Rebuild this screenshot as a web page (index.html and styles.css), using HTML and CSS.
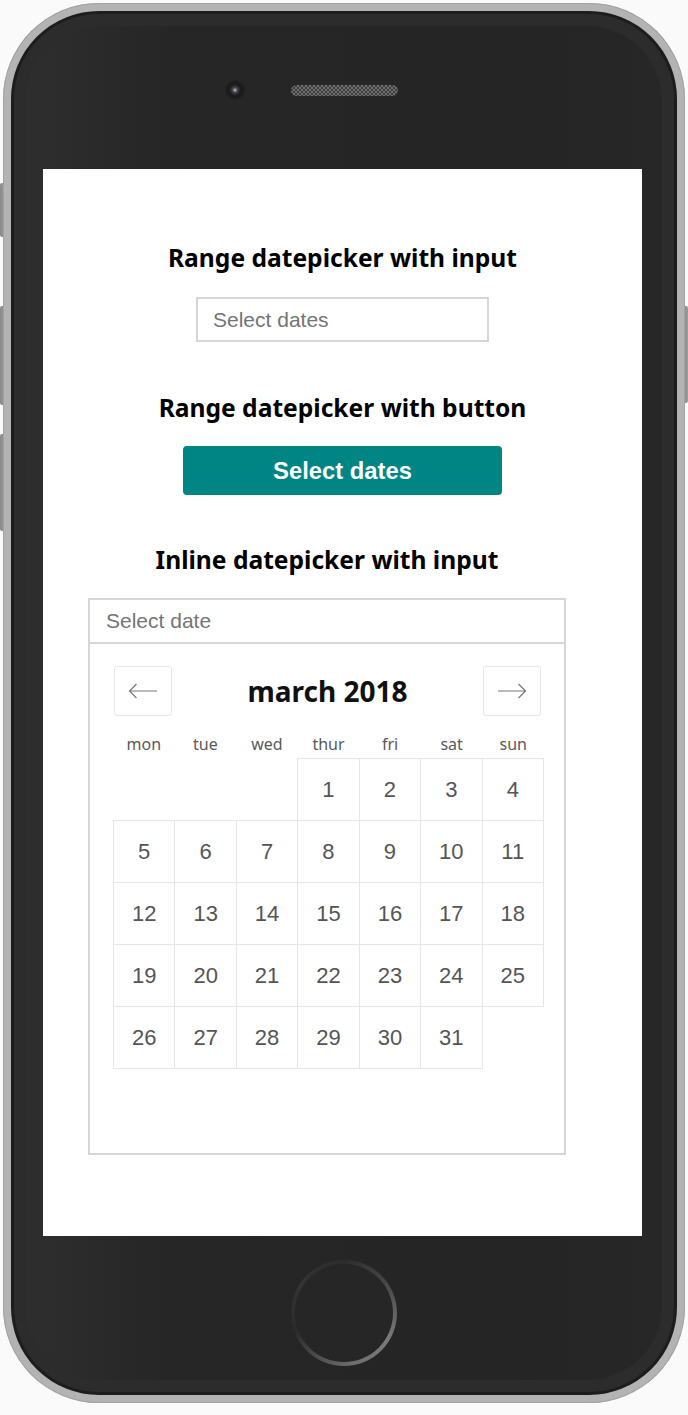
FILE: index.html
```html
<!DOCTYPE html>
<html lang="en">
<head>
  <meta charset="UTF-8">
  <meta name="viewport" content="width=device-width, initial-scale=1.0">
  <title>Datepicker demo</title>
  <link rel="stylesheet" href="styles.css">
</head>
<body>
  <div class="device">
    <!-- pulsanti laterali -->
    <span class="side-btn side-mute"></span>
    <span class="side-btn side-vol-up"></span>
    <span class="side-btn side-vol-down"></span>
    <span class="side-btn side-power"></span>

    <div class="phone">
      <div class="bezel">
        <div class="face">
          <div class="top-bar">
            <span class="camera"></span>
            <span class="speaker"></span>
          </div>

          <div class="screen">
            <section class="demo">
              <h2>Range datepicker with input</h2>
              <input class="date-input range-input" type="text" placeholder="Select dates">
            </section>

            <section class="demo demo-button">
              <h2>Range datepicker with button</h2>
              <button class="select-btn">Select dates</button>
            </section>

            <section class="demo demo-inline">
              <h2>Inline datepicker with input</h2>
              <input class="date-input inline-input" type="text" placeholder="Select date">
              <div class="calendar">
                <div class="cal-head">
                  <button class="nav-btn" aria-label="previous month">
                    <svg width="30" height="16" viewBox="0 0 30 16"><path d="M29 8H1.5M8.5 1L1.5 8l7 7" fill="none" stroke="#777" stroke-width="1.2"/></svg>
                  </button>
                  <span class="cal-title">march 2018</span>
                  <button class="nav-btn" aria-label="next month">
                    <svg width="30" height="16" viewBox="0 0 30 16"><path d="M1 8h27.5M21.5 1l7 7-7 7" fill="none" stroke="#777" stroke-width="1.2"/></svg>
                  </button>
                </div>
                <div class="weekdays">
                  <span>mon</span><span>tue</span><span>wed</span><span>thur</span><span>fri</span><span>sat</span><span>sun</span>
                </div>
                <div class="days" id="days"></div>
              </div>
            </section>
          </div>

          <div class="home-area">
            <span class="home-btn"></span>
          </div>
        </div>
      </div>
    </div>
  </div>

  <script>
    // marzo 2018 inizia di giovedì
    const days = document.getElementById('days');
    const offset = 3;
    for (let i = 0; i < offset; i++) {
      const empty = document.createElement('span');
      empty.className = 'day empty';
      days.appendChild(empty);
    }
    for (let d = 1; d <= 31; d++) {
      const cell = document.createElement('span');
      cell.className = 'day';
      cell.textContent = d;
      days.appendChild(cell);
    }
  </script>
</body>
</html>
```

FILE: styles.css
```css
body {
  margin: 0;
  background-color: #fafafa;
  font-family: 'Liberation Sans', Arial, sans-serif;
}
.device {
  position: relative;
  width: 688px;
  height: 1415px;
}
.side-btn {
  position: absolute;
  width: 5px;
  background: linear-gradient(90deg, #8a8a8a, #9a9a9a);
  border-radius: 2px 0 0 2px;
}
.side-mute { left: 0; top: 180px; height: 54px; }
.side-vol-up { left: 0; top: 303px; height: 99px; }
.side-vol-down { left: 0; top: 431px; height: 97px; }
.side-power { left: 683px; top: 303px; height: 97px; border-radius: 0 2px 2px 0; }

.phone {
  position: relative;
  margin: 3px 0 0 3px;
  width: 682px;
  height: 1400px;
  box-sizing: border-box;
  padding: 8px;
  border-radius: 96px;
  background: #b3b3b3;
  box-shadow: inset 0 0 0 1px #a2a2a2;
}
.bezel {
  height: 100%;
  box-sizing: border-box;
  padding: 12px;
  border: 3px solid #1d1d1d;
  border-radius: 88px;
  background: #2c2c2c;
}
.face {
  height: 100%;
  border-radius: 74px;
  background: linear-gradient(90deg, #2e2e2e, #262626 22%, #252525 80%, #272727);
  padding-left: 17px;
  display: flex;
  flex-direction: column;
}
.top-bar {
  height: 143px;
  box-sizing: border-box;
  padding-bottom: 15px;
  margin-left: -17px;
  display: flex;
  justify-content: center;
  align-items: center;
}
.camera {
  width: 20px;
  height: 20px;
  border-radius: 50%;
  margin-right: 46px;
  background: radial-gradient(circle, #a0a0ac 0 1px, #50505a 2px, #2c2c32 4px, #1a1a1a 6px, #1c1c1c 8px, #222 10px);
}
.speaker {
  width: 107px;
  height: 11px;
  border-radius: 6px;
  margin-right: 65px;
  background: repeating-conic-gradient(#707070 0 25%, #3c3c3c 0 50%) 0 0 / 4px 4px;
}

.screen {
  width: 599px;
  height: 1067px;
  background: #fff;
  overflow: hidden;
  box-sizing: border-box;
  padding-top: 73px;
}
.demo {
  display: flex;
  flex-direction: column;
  align-items: center;
}
.demo h2 {
  margin: 0;
  font-family: 'Noto Sans', 'Open Sans', sans-serif;
  font-size: 24.6px;
  line-height: 32px;
  font-weight: 700;
  color: #000;
}
.date-input {
  font-family: 'Liberation Sans', Arial, sans-serif;
  font-size: 21px;
  color: #333;
  border: 2px solid #d6d6d6;
  box-sizing: border-box;
  outline: none;
}
.date-input::placeholder {
  color: #757575;
}
.range-input {
  margin-top: 23px;
  width: 293px;
  height: 45px;
  padding: 0 15px;
}
.demo-button {
  margin-top: 50px;
}
.select-btn {
  margin-top: 22px;
  width: 319px;
  height: 49px;
  border: none;
  border-radius: 4px;
  background-color: #008585;
  color: #fff;
  font-family: 'Liberation Sans', Arial, sans-serif;
  font-size: 23.8px;
  font-weight: 700;
  cursor: pointer;
}
.demo-inline {
  margin: 49px 0 0 45px;
  width: 478px;
}
.inline-input {
  margin-top: 22px;
  width: 100%;
  height: 46px;
  padding: 0 16px;
}

.calendar {
  width: 100%;
  height: 511px;
  box-sizing: border-box;
  border: 2px solid #d6d6d6;
  border-top: none;
  padding: 22px 20px 0 23px;
}
.cal-head {
  display: flex;
  justify-content: space-between;
  align-items: center;
  margin: 0 3px 0 1px;
}
.nav-btn {
  width: 58px;
  height: 50px;
  background: #fff;
  border: 1px solid #e6e6e6;
  border-radius: 3px;
  display: flex;
  align-items: center;
  justify-content: center;
  padding: 0;
  cursor: pointer;
}
.cal-title {
  font-family: 'Noto Sans', 'Open Sans', sans-serif;
  font-size: 28px;
  font-weight: 700;
  color: #111;
}
.weekdays {
  display: grid;
  grid-template-columns: repeat(7, 1fr);
  height: 42px;
  align-items: end;
  padding-bottom: 4px;
  box-sizing: border-box;
}
.weekdays span {
  text-align: center;
  font-family: 'Noto Sans', 'Open Sans', sans-serif;
  font-size: 16px;
  line-height: 20px;
  color: #5a5a5a;
}
.days {
  display: grid;
  grid-template-columns: repeat(7, 1fr);
  grid-auto-rows: 62px;
  padding: 1px 0 0 1px;
}
.day {
  margin: -1px 0 0 -1px;
  border: 1px solid #e6e6e6;
  display: flex;
  align-items: center;
  justify-content: center;
  font-size: 22px;
  color: #555;
}
.day.empty {
  border-color: transparent;
}

.home-area {
  display: flex;
  justify-content: center;
  margin-left: -17px;
  padding-top: 24px;
}
.home-btn {
  position: relative;
  width: 106px;
  height: 106px;
  border-radius: 50%;
  background: conic-gradient(from 0deg, #2c2c2c 0deg, #4a4a4a 60deg, #7a7a7a 120deg, #6e6e6e 170deg, #4a4a4a 215deg, #2a2a2a 250deg, #333 300deg, #2c2c2c 360deg);
}
.home-btn::after {
  content: '';
  position: absolute;
  inset: 4px;
  border-radius: 50%;
  background: #262626;
}
```
